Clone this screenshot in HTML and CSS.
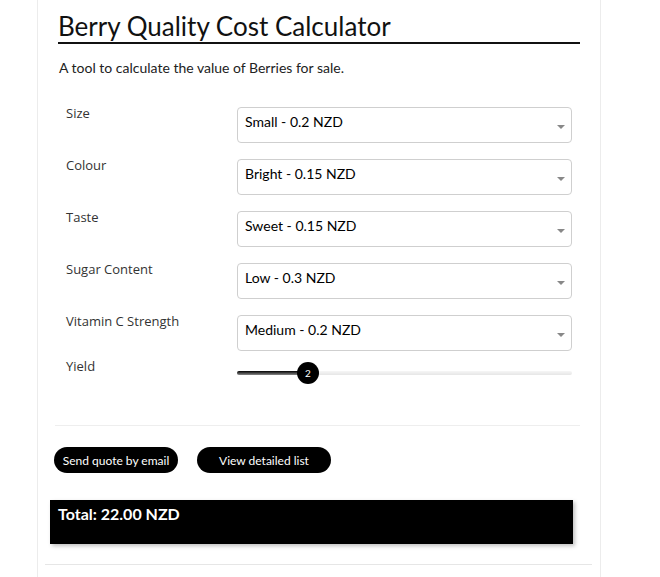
FILE: index.html
```html
<!DOCTYPE html>
<html lang="en">
<head>
<meta charset="utf-8">
<title>Berry Quality Cost Calculator</title>
<link rel="stylesheet" href="styles.css">
</head>
<body>
<div class="page">
  <h1 class="title">Berry Quality Cost Calculator</h1>
  <p class="intro">A tool to calculate the value of Berries for sale.</p>
  <div class="form">
    <div class="row">
      <label class="label">Size</label>
      <div class="select"><span>Small - 0.2 NZD</span><i class="caret"></i></div>
    </div>
    <div class="row">
      <label class="label">Colour</label>
      <div class="select"><span>Bright - 0.15 NZD</span><i class="caret"></i></div>
    </div>
    <div class="row">
      <label class="label">Taste</label>
      <div class="select"><span>Sweet - 0.15 NZD</span><i class="caret"></i></div>
    </div>
    <div class="row">
      <label class="label">Sugar Content</label>
      <div class="select"><span>Low - 0.3 NZD</span><i class="caret"></i></div>
    </div>
    <div class="row">
      <label class="label">Vitamin C Strength</label>
      <div class="select"><span>Medium - 0.2 NZD</span><i class="caret"></i></div>
    </div>
    <div class="row row-yield">
      <label class="label">Yield</label>
      <div class="slider">
        <div class="track"><div class="fill" style="width:71px"></div></div>
        <div class="thumb" style="left:60px">2</div>
      </div>
    </div>
  </div>
  <hr class="sep">
  <div class="actions">
    <button class="btn">Send quote by email</button>
    <button class="btn btn-wide">View detailed list</button>
  </div>
  <div class="total">Total: 22.00 NZD</div>
  <hr class="foot">
</div>
</body>
</html>
```
FILE: styles.css
```css
* { box-sizing: border-box; }
html, body { margin: 0; padding: 0; background: #fff; }
body { font-family: Lato, "Open Sans", sans-serif; color: #111; }

.page {
  margin-left: 37px;
  width: 564px;
  min-height: 577px;
  border-left: 1px solid #ececec;
  border-right: 1px solid #ececec;
  padding: 11px 20px 0 20px;
}

.title {
  margin: 0;
  font-weight: 400;
  font-size: 26px;
  line-height: 31px;
  color: #111;
  padding-bottom: 0;
  border-bottom: 2px solid #111;
}

.intro {
  margin: 14px 0 0 1px;
  font-size: 14px;
  line-height: 20px;
  color: #222;
}

.form {
  margin-top: 29px;
  padding: 0 8px;
  display: flex;
  flex-direction: column;
  gap: 16px;
}

.row {
  display: grid;
  grid-template-columns: 171px 1fr;
  align-items: start;
}

.label {
  font-family: "Open Sans", "Noto Sans", sans-serif;
  font-size: 13px;
  line-height: 18px;
  color: #333;
  margin-top: -3px;
}

.select {
  position: relative;
  height: 36px;
  border: 1px solid #cfcfcf;
  border-radius: 4px;
  padding: 5px 7px;
  font-size: 14px;
  line-height: 18px;
  color: #000;
  background: #fff;
}

.caret {
  position: absolute;
  right: 6px;
  top: 17px;
  width: 0;
  height: 0;
  border-left: 4px solid transparent;
  border-right: 4px solid transparent;
  border-top: 4px solid #888;
}

.row-yield { gap: 0; margin-top: -10px; }
.row-yield .label { margin-top: 0; }

.slider {
  position: relative;
  height: 24px;
  margin-top: 7px;
}

.track {
  position: absolute;
  left: 0; right: 0;
  top: 7px;
  height: 4px;
  border-radius: 2px;
  background: linear-gradient(#f6f6f6, #e6e6e6);
  overflow: hidden;
}

.fill {
  height: 100%;
  background: linear-gradient(#000, #888);
}

.thumb {
  position: absolute;
  top: -2px;
  width: 22px;
  height: 22px;
  border-radius: 50%;
  background: #000;
  color: #fff;
  font-size: 10px;
  line-height: 22px;
  text-align: center;
}

.sep {
  margin: 37px 0 0 -3px;
  border: 0;
  border-top: 1px solid #eee;
}

.actions {
  margin: 21px 0 0 -4px;
  display: flex;
  gap: 19px;
}

.btn {
  font-family: Lato, "Open Sans", sans-serif;
  font-size: 12px;
  color: #fff;
  background: #000;
  border: 0;
  border-radius: 13px;
  height: 26px;
  width: 124px;
  padding: 0;
}
.btn-wide { width: 134px; }

.total {
  margin: 27px 7px 0 -8px;
  height: 44px;
  background: #000;
  color: #fff;
  font-weight: 700;
  font-size: 16px;
  padding: 4px 8px;
  box-shadow: 2px 2px 4px rgba(0,0,0,0.25);
}

.foot {
  margin: 20px -12px 0 -13px;
  border: 0;
  border-top: 1px solid #e6e6e6;
}
```
